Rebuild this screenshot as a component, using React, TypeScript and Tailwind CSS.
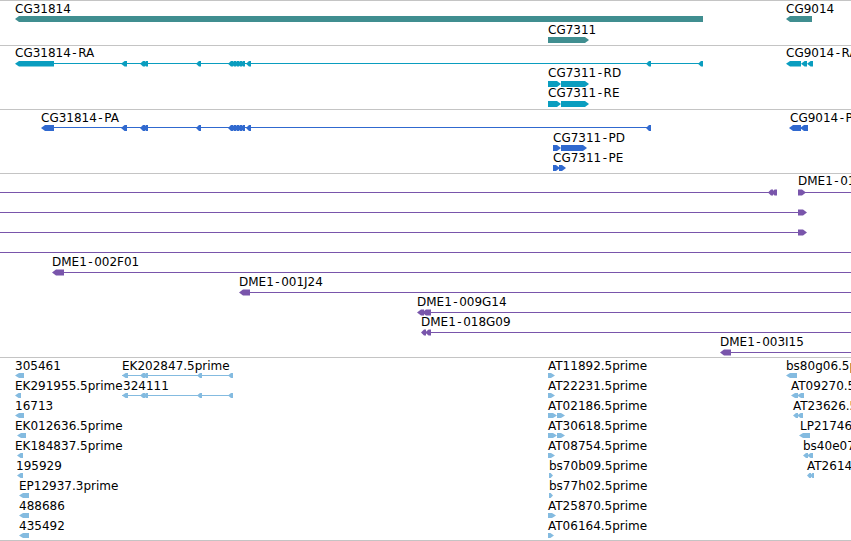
import React from 'react';

type Dir = 'L' | 'R' | 'N';
type G =
  | { t: 'b'; x1: number; x2: number; y: number; h: number; d: Dir }
  | { t: 'l'; x1: number; x2: number; y: number };
type Lb = { x: number; bl: number; text: string };
type Track = { top: number; hCls: string; svgH: number; color: string; glyphs: G[]; labels: Lb[] };

const b = (x1: number, x2: number, y: number, h: number, d: Dir): G => ({ t: 'b', x1, x2, y, h, d });
const l = (x1: number, x2: number, y: number): G => ({ t: 'l', x1, x2, y });
const lb = (x: number, bl: number, text: string): Lb => ({ x, bl, text });

// transcript exon markers (pointing left) shared by CG31814 transcripts
const markers = (y: number, h: number, last: number[]): G[] => [
  b(121, 127, y, h, 'L'),
  b(140, 145, y, h, 'L'),
  b(143, 148, y, h, 'L'),
  b(196, 201, y, h, 'L'),
  b(228, 233, y, h, 'L'),
  b(231, 236, y, h, 'L'),
  b(234, 239, y, h, 'L'),
  b(237, 242, y, h, 'L'),
  b(240, 245, y, h, 'L'),
  b(246, 251, y, h, 'L'),
  ...last.map((x) => b(x, x + 5, y, h, 'L')),
];

const estRow = (r: number) => 373 + 20 * r;
const estBl = (r: number) => 370 + 20 * r;

const tracks: Track[] = [
  {
    top: 0,
    hCls: 'h-[45px]',
    svgH: 44,
    color: '#408e90',
    glyphs: [b(15, 703, 16, 6, 'L'), b(548, 589, 37, 6, 'R'), b(786, 812, 16, 6, 'L')],
    labels: [lb(15, 12.7, 'CG31814'), lb(548, 34, 'CG7311'), lb(786, 12.7, 'CG9014')],
  },
  {
    top: 45,
    hCls: 'h-[64px]',
    svgH: 63,
    color: '#0a9dbf',
    glyphs: [
      l(54, 703, 63),
      b(15, 54, 61, 5.5, 'L'),
      ...markers(61, 5.5, [646, 698]),
      b(548, 561, 81, 6, 'R'),
      b(561, 589, 81, 6, 'R'),
      b(548, 561, 101, 6, 'R'),
      b(561, 589, 101, 6, 'R'),
      b(786, 801, 61, 5.5, 'L'),
      b(801, 807, 61, 5.5, 'L'),
      b(807, 813, 61, 5.5, 'L'),
    ],
    labels: [
      lb(15, 57.3, 'CG31814-RA'),
      lb(548, 77.3, 'CG7311-RD'),
      lb(548, 97.3, 'CG7311-RE'),
      lb(786, 57.3, 'CG9014-RA'),
    ],
  },
  {
    top: 109,
    hCls: 'h-[64px]',
    svgH: 63,
    color: '#3069cf',
    glyphs: [
      l(54, 651, 127),
      b(41, 54, 125, 6, 'L'),
      ...markers(125, 6, [646]),
      b(553, 561, 145, 6, 'R'),
      b(561, 587, 145, 6, 'R'),
      b(553, 560, 165, 6, 'R'),
      b(559, 566, 165, 6, 'R'),
      b(789, 801, 125, 6, 'L'),
      b(800, 808, 125, 6, 'L'),
    ],
    labels: [
      lb(41, 121.7, 'CG31814-PA'),
      lb(553, 141.7, 'CG7311-PD'),
      lb(553, 161.7, 'CG7311-PE'),
      lb(790, 121.7, 'CG9014-PA'),
    ],
  },
  {
    top: 173,
    hCls: 'h-[184px]',
    svgH: 183,
    color: '#7955ab',
    glyphs: [
      l(0, 772, 192),
      b(768, 773, 189.5, 6, 'L'),
      b(771, 777, 189.5, 6, 'L'),
      l(805, 851, 192),
      b(798, 806, 189.5, 6, 'R'),
      l(0, 801, 212),
      b(798, 807, 209.5, 6, 'R'),
      l(0, 801, 232),
      b(798, 807, 229.5, 6, 'R'),
      l(0, 851, 252),
      l(60, 851, 272),
      b(52, 64, 269.5, 6, 'L'),
      l(246, 851, 292),
      b(239, 250, 289.5, 6, 'L'),
      l(428, 851, 312),
      b(417, 424, 309.5, 6, 'L'),
      b(422, 431, 309.5, 6, 'L'),
      l(428, 851, 332),
      b(421, 426, 329.5, 6, 'L'),
      b(425, 431, 329.5, 6, 'L'),
      l(728, 851, 352),
      b(720, 731, 349.5, 6, 'L'),
    ],
    labels: [
      lb(798, 185.3, 'DME1-011K02'),
      lb(52, 265.7, 'DME1-002F01'),
      lb(239, 285.7, 'DME1-001J24'),
      lb(417, 305.7, 'DME1-009G14'),
      lb(421, 325.7, 'DME1-018G09'),
      lb(720, 345.7, 'DME1-003I15'),
    ],
  },
  {
    top: 357,
    hCls: 'h-[183px]',
    svgH: 182,
    color: '#84bbe0',
    glyphs: [
      b(15, 24, estRow(0), 5, 'L'),
      b(15, 21, estRow(1), 5, 'L'),
      b(15, 24, estRow(2), 5, 'L'),
      b(17, 26, estRow(3), 5, 'L'),
      b(17, 23, estRow(4), 5, 'L'),
      b(17, 23, estRow(5), 5, 'L'),
      b(19, 29, estRow(6), 5, 'L'),
      b(19, 29, estRow(7), 5, 'L'),
      b(19, 29, estRow(8), 5, 'L'),
      l(122, 232, 375),
      b(122, 128, estRow(0), 5, 'L'),
      b(140, 145, estRow(0), 5, 'L'),
      b(143, 148, estRow(0), 5, 'L'),
      b(197, 202, estRow(0), 5, 'L'),
      b(228, 233, estRow(0), 5, 'L'),
      l(122, 232, 395),
      b(122, 128, estRow(1), 5, 'L'),
      b(140, 145, estRow(1), 5, 'L'),
      b(143, 148, estRow(1), 5, 'L'),
      b(197, 202, estRow(1), 5, 'L'),
      b(228, 233, estRow(1), 5, 'L'),
      b(548, 555, estRow(0), 5, 'R'),
      b(548, 555, estRow(1), 5, 'R'),
      b(548, 557, estRow(2), 5, 'R'),
      b(557, 565, estRow(2), 5, 'R'),
      b(548, 557, estRow(3), 5, 'R'),
      b(557, 565, estRow(3), 5, 'R'),
      b(548, 555, estRow(4), 5, 'R'),
      b(549, 553, estRow(5), 5, 'R'),
      b(549, 553, estRow(6), 5, 'R'),
      b(548, 556, estRow(7), 5, 'R'),
      b(548, 554, estRow(8), 5, 'R'),
      b(786, 797, estRow(0), 5, 'L'),
      b(791, 798, estRow(1), 5, 'L'),
      b(797, 804, estRow(1), 5, 'L'),
      b(793, 798, estRow(2), 5, 'L'),
      b(797, 803, estRow(2), 5, 'L'),
      b(799, 810, estRow(3), 5, 'L'),
      b(803, 808, estRow(4), 5, 'L'),
      b(807, 813, estRow(4), 5, 'L'),
      b(807, 811, estRow(5), 5, 'L'),
      b(810, 814, estRow(5), 5, 'L'),
    ],
    labels: [
      lb(15, estBl(0), '305461'),
      lb(15, estBl(1), 'EK291955.5prime'),
      lb(15, estBl(2), '16713'),
      lb(15, estBl(3), 'EK012636.5prime'),
      lb(15, estBl(4), 'EK184837.5prime'),
      lb(16, estBl(5), '195929'),
      lb(19, estBl(6), 'EP12937.3prime'),
      lb(19, estBl(7), '488686'),
      lb(19, estBl(8), '435492'),
      lb(122, estBl(0), 'EK202847.5prime'),
      lb(123, estBl(1), '324111'),
      lb(548, estBl(0), 'AT11892.5prime'),
      lb(548, estBl(1), 'AT22231.5prime'),
      lb(548, estBl(2), 'AT02186.5prime'),
      lb(548, estBl(3), 'AT30618.5prime'),
      lb(548, estBl(4), 'AT08754.5prime'),
      lb(549, estBl(5), 'bs70b09.5prime'),
      lb(549, estBl(6), 'bs77h02.5prime'),
      lb(548, estBl(7), 'AT25870.5prime'),
      lb(548, estBl(8), 'AT06164.5prime'),
      lb(786, estBl(0), 'bs80g06.5prime'),
      lb(791, estBl(1), 'AT09270.5prime'),
      lb(793, estBl(2), 'AT23626.5prime'),
      lb(800, estBl(3), 'LP21746.5prime'),
      lb(803, estBl(4), 'bs40e07.5prime'),
      lb(807, estBl(5), 'AT26140.5prime'),
    ],
  },
];

function pts(g: Extract<G, { t: 'b' }>): string {
  const { x1, x2, y, h, d } = g;
  const yc = y + h / 2;
  const a = Math.min(4, (x2 - x1) * 0.6);
  if (d === 'L')
    return `${x1},${yc} ${x1 + a},${y} ${x2},${y} ${x2},${y + h} ${x1 + a},${y + h}`;
  if (d === 'R')
    return `${x1},${y} ${x2 - a},${y} ${x2},${yc} ${x2 - a},${y + h} ${x1},${y + h}`;
  return `${x1},${y} ${x2},${y} ${x2},${y + h} ${x1},${y + h}`;
}

function Label({ text }: { text: string }) {
  const parts = text.split('-');
  return (
    <>
      {parts.map((p, i) => (
        <React.Fragment key={i}>
          {i > 0 && <span className="mx-[1.5px]">-</span>}
          {p}
        </React.Fragment>
      ))}
    </>
  );
}

function TrackView({ tr }: { tr: Track }) {
  return (
    <div className={`relative w-full shrink-0 border-t border-[#c4c4c4] ${tr.hCls}`}>
      <svg className="absolute left-0 top-0" width={851} height={tr.svgH}>
        <g transform={`translate(0 ${-(tr.top + 1)})`} fill={tr.color}>
          {tr.glyphs.map((g, i) =>
            g.t === 'l' ? (
              <rect key={i} x={g.x1} y={g.y} width={g.x2 - g.x1} height={1} shapeRendering="crispEdges" />
            ) : (
              <polygon key={i} points={pts(g)} />
            )
          )}
        </g>
      </svg>
      {tr.labels.map((lab, i) => (
        <span
          key={i}
          className="absolute whitespace-nowrap text-[12px] leading-[14px] text-black"
          style={{ left: lab.x, top: lab.bl - 11 - tr.top - 1 }}
        >
          <Label text={lab.text} />
        </span>
      ))}
    </div>
  );
}

export default function App() {
  return (
    <div className="w-[851px] h-[541px] bg-white overflow-hidden flex flex-col font-['DejaVu_Sans',sans-serif]">
      {tracks.map((tr, i) => (
        <TrackView key={i} tr={tr} />
      ))}
      <div className="h-[1px] shrink-0 bg-[#c4c4c4]" />
    </div>
  );
}
